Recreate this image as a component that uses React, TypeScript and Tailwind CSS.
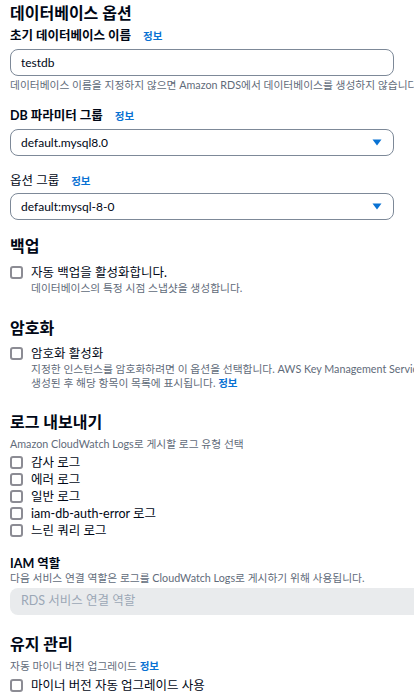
import React from 'react';

const font = { fontFamily: 'Lato, "Noto Sans CJK KR", sans-serif' };

const Info = ({ className = '' }: { className?: string }) => (
  <span className={`text-[10.5px] font-bold text-[#0972d3] ${className}`}>정보</span>
);

const Box = () => (
  <span className="inline-block h-[13px] w-[13px] shrink-0 rounded-[3px] border-2 border-[#8c8c94] bg-white" />
);

const Check = ({ label }: { label: string }) => (
  <div className="flex h-[17px] items-center gap-[8px] text-[12.5px] leading-[17px] text-[#000716]">
    <Box />
    <span>{label}</span>
  </div>
);

const Select = ({ value, className = '' }: { value: string; className?: string }) => (
  <div
    className={`flex h-[27px] w-[384px] items-center justify-between rounded-[8px] border border-[#7d8998] bg-white pl-[10px] pr-[11px] text-[12px] text-[#000716] ${className}`}
  >
    <span>{value}</span>
    <svg width="10" height="7" viewBox="0 0 10 7">
      <path d="M0.5 0.5h9L5 6.5z" fill="#0972d3" />
    </svg>
  </div>
);

export default function App() {
  return (
    <div className="h-[692px] w-[414px] overflow-hidden bg-white" style={font}>
      <div className="px-[10px] pt-[3px] whitespace-nowrap">
        <h2 className="text-[16px] font-bold leading-[20px] text-[#000716]">데이터베이스 옵션</h2>

        <div className="mt-[5px] flex items-center gap-[12px] leading-[16px]">
          <span className="text-[12.5px] font-bold text-[#000716]">초기 데이터베이스 이름</span>
          <Info />
        </div>
        <div className="mt-[5px] flex h-[27px] w-[384px] items-center rounded-[8px] border border-[#7d8998] bg-white pl-[10px] text-[12px] text-[#000716]">
          testdb
        </div>
        <p className="mt-[2px] text-[10.75px] leading-[14px] text-[#5f6b7a]">
          데이터베이스 이름을 지정하지 않으면 Amazon RDS에서 데이터베이스를 생성하지 않습니다.
        </p>

        <div className="mt-[16px] flex items-center gap-[12px] leading-[16px]">
          <span className="text-[12.5px] font-bold text-[#000716]">DB 파라미터 그룹</span>
          <Info />
        </div>
        <Select value="default.mysql8.0" className="mt-[5px]" />

        <div className="mt-[17px] flex items-center gap-[12px] leading-[16px]">
          <span className="text-[12.5px] text-[#000716]">옵션 그룹</span>
          <Info />
        </div>
        <Select value="default:mysql-8-0" className="mt-[4px]" />

        <h2 className="mt-[16px] text-[16px] font-bold leading-[20px] text-[#000716]">백업</h2>
        <div className="mt-[8px]">
          <Check label="자동 백업을 활성화합니다." />
          <p className="pl-[21px] text-[10.75px] leading-[14px] text-[#5f6b7a]">
            데이터베이스의 특정 시점 스냅샷을 생성합니다.
          </p>
        </div>

        <h2 className="mt-[23px] text-[16px] font-bold leading-[20px] text-[#000716]">암호화</h2>
        <div className="mt-[7px]">
          <Check label="암호화 활성화" />
          <p className="pl-[21px] text-[10.75px] leading-[14px] text-[#5f6b7a]">
            지정한 인스턴스를 암호화하려면 이 옵션을 선택합니다. AWS Key Management Service 콘솔을 사용하여 키를
          </p>
          <p className="pl-[21px] text-[10.75px] leading-[14px] text-[#5f6b7a]">
            생성된 후 해당 항목이 목록에 표시됩니다. <Info />
          </p>
        </div>

        <h2 className="mt-[22px] text-[16px] font-bold leading-[20px] text-[#000716]">로그 내보내기</h2>
        <p className="mt-[5px] text-[10.75px] leading-[14px] text-[#5f6b7a]">
          Amazon CloudWatch Logs로 게시할 로그 유형 선택
        </p>
        <div className="mt-[3px] flex flex-col">
          {['감사 로그', '에러 로그', '일반 로그', 'iam-db-auth-error 로그', '느린 쿼리 로그'].map((l) => (
            <Check key={l} label={l} />
          ))}
        </div>

        <div className="mt-[18px] text-[12.5px] font-bold leading-[14px] text-[#000716]">IAM 역할</div>
        <p className="text-[10.75px] leading-[14px] text-[#5f6b7a]">
          다음 서비스 연결 역할은 로그를 CloudWatch Logs로 게시하기 위해 사용됩니다.
        </p>
        <div className="mt-[3px] flex h-[27px] w-[420px] items-center rounded-[8px] bg-[#e9ebed] pl-[11px] text-[12.5px] text-[#9ba7b6]">
          RDS 서비스 연결 역할
        </div>

        <h2 className="mt-[19px] text-[16px] font-bold leading-[20px] text-[#000716]">유지 관리</h2>
        <p className="mt-[5px] text-[10.75px] leading-[14px] text-[#5f6b7a]">
          자동 마이너 버전 업그레이드 <Info />
        </p>
        <div className="mt-[4px]">
          <Check label="마이너 버전 자동 업그레이드 사용" />
        </div>
      </div>
    </div>
  );
}
